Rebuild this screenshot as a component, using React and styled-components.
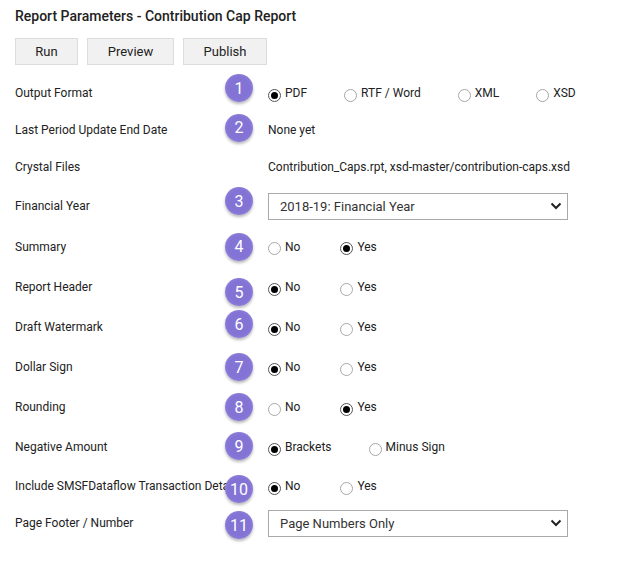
import React from 'react';
import styled, { createGlobalStyle } from 'styled-components';

const GlobalStyle = createGlobalStyle`
  body {
    margin: 0;
    background: #fff;
    font-family: Roboto, "Liberation Sans", Arial, sans-serif;
    color: #222;
  }
`;

const Page = styled.div`
  width: 637px;
  height: 583px;
  padding: 8px 15px 0;
  box-sizing: border-box;
`;

const Title = styled.h1`
  margin: 0;
  font-size: 14px;
  font-weight: 500;
  line-height: 17px;
  color: #222;
`;

const Toolbar = styled.div`
  display: flex;
  gap: 9px;
  margin-top: 13px;
`;

const ToolButton = styled.button`
  height: 27px;
  width: ${p => p.w}px;
  padding: 0;
  background: #f1f1f1;
  border: 1px solid #dcdcdc;
  font-family: inherit;
  font-size: 13px;
  color: #222;
`;

const Form = styled.div`
  margin-top: 10px;
`;

const Row = styled.div`
  display: grid;
  grid-template-columns: 195px 28px 1fr;
  column-gap: 15px;
  align-items: center;
  height: ${p => p.h}px;
`;

const Label = styled.div`
  font-size: 12px;
  white-space: nowrap;
  color: #222;
`;

const Badge = styled.div`
  position: relative;
  z-index: 1;
  top: ${p => p.offset || 0}px;
  width: 28px;
  height: 28px;
  border-radius: 50%;
  background: radial-gradient(circle, #8373d5 55%, #9a8de0 100%);
  box-shadow: 0 2px 3px rgba(0, 0, 0, 0.28);
  color: #fff;
  font-size: 16px;
  display: flex;
  align-items: center;
  justify-content: center;
`;

const Value = styled.div`
  font-size: 12px;
  white-space: nowrap;
  color: #222;
`;

const RadioGroup = styled.div`
  display: flex;
  align-items: center;
`;

const RadioOption = styled.label`
  display: flex;
  align-items: center;
  font-size: 12px;
  white-space: nowrap;
  margin-right: ${p => p.gap}px;
  color: #222;
`;

const RadioCircle = styled.span`
  width: 11px;
  height: 11px;
  border-radius: 50%;
  border: 1px solid ${p => (p.checked ? '#555' : '#a8a8a8')};
  background: #fff;
  display: flex;
  align-items: center;
  justify-content: center;
  margin-right: 4px;
  margin-top: 4px;

  &::after {
    content: '';
    width: 7px;
    height: 7px;
    border-radius: 50%;
    background: ${p => (p.checked ? '#000' : 'transparent')};
  }
`;

const Select = styled.div`
  width: 300px;
  height: 27px;
  box-sizing: border-box;
  border: 1px solid #a9a9a9;
  display: flex;
  align-items: center;
  justify-content: space-between;
  padding: 0 5px 0 11px;
  font-size: 13px;
  color: #333;
`;

const Chevron = () => (
  <svg width="12" height="8" viewBox="0 0 12 8">
    <path d="M1.5 1.5 L6 6 L10.5 1.5" fill="none" stroke="#222" strokeWidth="2" />
  </svg>
);

const Radios = ({ options, value, gap = 37 }) => (
  <RadioGroup>
    {options.map(o => (
      <RadioOption key={o} gap={gap}>
        <RadioCircle checked={o === value} />
        {o}
      </RadioOption>
    ))}
  </RadioGroup>
);

const yesNo = ['No', 'Yes'];

const rows = [
  { label: 'Output Format', h: 36, off: -5, control: <Radios options={['PDF', 'RTF / Word', 'XML', 'XSD']} value="PDF" /> },
  { label: 'Last Period Update End Date', h: 37, off: -2, control: <Value>None yet</Value> },
  { label: 'Crystal Files', h: 38, control: <Value>Contribution_Caps.rpt, xsd-master/contribution-caps.xsd</Value> },
  { label: 'Financial Year', h: 40, off: -5, control: <Select>2018-19: Financial Year<Chevron /></Select> },
  { label: 'Summary', h: 41, off: 0, control: <Radios options={yesNo} value="Yes" gap={40} /> },
  { label: 'Report Header', h: 40, off: 5, control: <Radios options={yesNo} value="No" gap={40} /> },
  { label: 'Draft Watermark', h: 40, off: -3, control: <Radios options={yesNo} value="No" gap={40} /> },
  { label: 'Dollar Sign', h: 40, off: 0, control: <Radios options={yesNo} value="No" gap={40} /> },
  { label: 'Rounding', h: 40, off: 0, control: <Radios options={yesNo} value="Yes" gap={40} /> },
  { label: 'Negative Amount', h: 40, off: -1, control: <Radios options={['Brackets', 'Minus Sign']} value="Brackets" /> },
  { label: 'Include SMSFDataflow Transaction Details', h: 38, off: 3, control: <Radios options={yesNo} value="No" gap={40} /> },
  { label: 'Page Footer / Number', h: 36, off: 2, control: <Select>Page Numbers Only<Chevron /></Select> },
];

let n = 0;

export default function App() {
  n = 0;
  return (
    <Page>
      <GlobalStyle />
      <Title>Report Parameters - Contribution Cap Report</Title>
      <Toolbar>
        <ToolButton w={63}>Run</ToolButton>
        <ToolButton w={87}>Preview</ToolButton>
        <ToolButton w={84}>Publish</ToolButton>
      </Toolbar>
      <Form>
        {rows.map(r => {
          const hasBadge = r.off !== undefined;
          if (hasBadge) n += 1;
          return (
            <Row key={r.label} h={r.h}>
              <Label>{r.label}</Label>
              {hasBadge ? <Badge offset={r.off}>{n}</Badge> : <span />}
              {r.control}
            </Row>
          );
        })}
      </Form>
    </Page>
  );
}
